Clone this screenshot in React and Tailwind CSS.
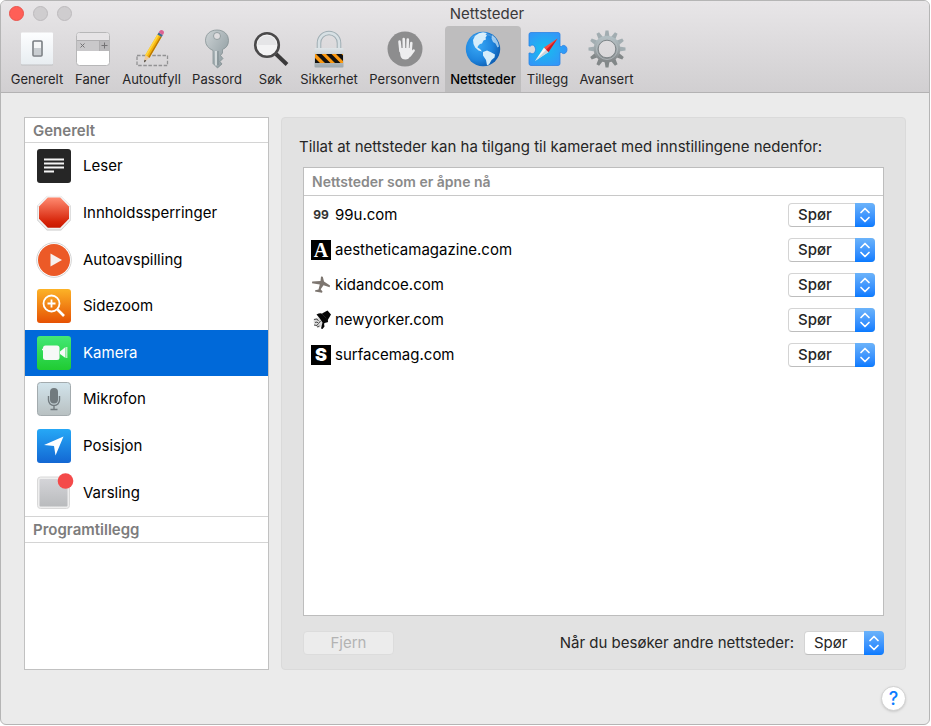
import { useState } from 'react'

function GeneralIcon() {
  return (
    <svg width="36" height="36" viewBox="0 0 36 36" aria-hidden="true">
      <defs>
        <linearGradient id="plate" x1="0" y1="0" x2="0" y2="1">
          <stop offset="0" stopColor="#fdfeff" />
          <stop offset="1" stopColor="#e8edf1" />
        </linearGradient>
      </defs>
      <rect x="2" y="2" width="32" height="32.5" rx="1" fill="#bfc0c2" />
      <rect x="2" y="1.5" width="32" height="32" rx="1" fill="url(#plate)" />
      <rect x="14" y="10" width="9" height="15" rx="1" fill="#eceef0" stroke="#7a7e82" strokeWidth="1.6" />
      <path d="M15 17h7v7h-7z" fill="#c9cdd1" />
      <path d="M15 11h7v6h-7z" fill="#f4f5f6" />
    </svg>
  )
}

function TabsIcon() {
  return (
    <svg width="36" height="36" viewBox="0 0 36 36" aria-hidden="true">
      <rect x="1.5" y="1.5" width="33" height="33" rx="3" fill="#fff" stroke="#b7b7b8" />
      <path d="M2 10V4.500Q2 2 4.500 2h27Q34 2 34 4.500V10z" fill="#e6e4e6" />
      <path d="M2 9.500h32V20H2z" fill="#c9c8ca" />
      <path d="M24.500 9.500H34V20h-9.500z" fill="#b9b8ba" />
      <path d="M2 9.500h32M24.500 9.500V20" stroke="#aeadaf" />
      <path d="M5.500 12.500l4 4m0-4l-4 4M26.500 14.500h6M29.500 11.500v6" stroke="#737274" />
    </svg>
  )
}

function PencilIcon() {
  return (
    <svg width="36" height="38" viewBox="0 0 36 38" className="overflow-visible" aria-hidden="true">
      <rect x="3" y="25.5" width="30.5" height="10" fill="none" stroke="#929294" strokeWidth="1.3" strokeDasharray="3.5 1.6" />
      <path d="M10 32.500L11.300 25 15.500 27.500z" fill="#eec99a" />
      <path d="M10 32.500l.6-2.800 1.700 1z" fill="#333" />
      <path d="M11.300 25L23.400 4.500l4.200 2.500-12.100 20.700z" fill="#f6b60c" />
      <path d="M11.300 25L23.400 4.500l1.500.900-12.200 20.500z" fill="#ffd53f" />
      <path d="M15.500 27.700L27.600 7l-1.100-.700L14.300 27z" fill="#b87607" />
      <path d="M23.400 4.500l1.300-2 4.200 2.500-1.300 2z" fill="#406a8d" />
      <path d="M24.700 2.500l.8-1.400Q27-.8 29 .4q1.800 1.200.7 3.200L28.900 5z" fill="#dc6293" />
    </svg>
  )
}

function KeyIcon() {
  return (
    <svg width="36" height="40" viewBox="0 0 36 40" aria-hidden="true">
      <defs>
        <linearGradient id="key" x1="0" y1="0" x2="1" y2="1">
          <stop offset="0" stopColor="#cdd3d5" />
          <stop offset="1" stopColor="#87959a" />
        </linearGradient>
      </defs>
      <path
        fillRule="evenodd"
        fill="url(#key)"
        stroke="#7d898d"
        strokeWidth=".7"
        d="M18 1C11 1 6.500 5.500 6.500 11.500q0 6.500 7.500 10v13l4.500 4.500 4.500-4-2-2.500 3-3-2.500-3 2-2.500V20.500q6-2.500 6-9C29.500 5.500 25 1 18 1zM18 3.500a3.500 3.500 0 1 1 0 7 3.500 3.500 0 0 1 0-7z"
      />
      <path d="M17 22v14.500" stroke="#e9eded" strokeWidth="1.4" />
      <path d="M19 22v14" stroke="#7b878b" />
    </svg>
  )
}

function SearchIcon() {
  return (
    <svg width="36" height="36" viewBox="0 0 36 36" aria-hidden="true">
      <path d="M23 23l11 10.500" stroke="#3b3a3b" strokeWidth="4" />
      <circle cx="14" cy="14" r="11.8" fill="#f3f3f4" stroke="#4a494a" strokeWidth="2.6" />
      <path d="M4.500 14a9.500 9.500 0 0 1 19 0z" fill="#e5e5e7" />
    </svg>
  )
}

function LockIcon() {
  return (
    <svg width="36" height="38" viewBox="0 0 36 38" aria-hidden="true">
      <defs>
        <linearGradient id="lock" x1="0" y1="0" x2="0" y2="1">
          <stop offset="0" stopColor="#dfe5e8" />
          <stop offset="1" stopColor="#9da7ac" />
        </linearGradient>
        <clipPath id="tape">
          <path d="M4 24h28v9H4z" />
        </clipPath>
      </defs>
      <path d="M8 20V13a10 10 0 0 1 20 0v7" fill="none" stroke="#9fadb3" strokeWidth="4.6" />
      <path d="M8 20V13a10 10 0 0 1 20 0v7" fill="none" stroke="#d7e0e4" strokeWidth="2.6" />
      <rect x="3.5" y="18" width="29" height="19.5" rx="1" fill="url(#lock)" />
      <g clipPath="url(#tape)">
        <path d="M4 24h28v9H4z" fill="#f99811" />
        <path d="M5 24h5.500l9 9H14zM15 24h5.500l9 9H24zM25 24h5.500l9 9H34zM-4 24h4l9 9H4z" fill="#121212" />
      </g>
    </svg>
  )
}

function HandIcon() {
  return (
    <svg width="36" height="36" viewBox="0 0 36 36" aria-hidden="true">
      <circle cx="18" cy="18" r="17.5" fill="#8d8d8e" />
      <g fill="none" stroke="#eeeeef" strokeLinecap="round" strokeWidth="2.6">
        <path d="M13.500 20l-1-9.500M17 19l-.3-11M20.500 19l.3-10.500M23.500 21l.8-9" />
        <path d="M23 24.500l3.700-5" strokeWidth="2.4" />
      </g>
      <path d="M12.300 17h12.400l.8 3-2.500 5.500q-1.200 3-4.500 3-4 0-5-3.500z" fill="#eeeeef" />
    </svg>
  )
}

function GlobeIcon() {
  return (
    <svg width="36" height="36" viewBox="0 0 36 36" aria-hidden="true">
      <defs>
        <radialGradient id="sea" cx=".35" cy=".4" r=".7">
          <stop offset="0" stopColor="#38a8f5" />
          <stop offset=".6" stopColor="#1f86df" />
          <stop offset="1" stopColor="#0b59ad" />
        </radialGradient>
      </defs>
      <circle cx="18" cy="18" r="17.2" fill="url(#sea)" />
      <g fill="#d5edfb">
        <path d="M10 5l4-2.800 4-1 4 .8-1.500 1.500 1.500 1-1.500 2 .5 2-2.500 1-1.500 3-2 .5-2 2-.5 1.500 2.500 1.500 2 2.500-3.500-1-3.300-3L8.500 13 8 9z" />
        <path d="M18 21l4-1.500 3.500 1.500 4.500 2.500-.5 3-3 2.500-2.500 4.500-2 .8-1-5.300-3-4.500z" />
        <path d="M27 4l3.500 3 2.500 4.500 1 4-1.500 1-2-4-2.500-1.500-1.500-3.500z" opacity=".7" />
      </g>
      <path d="M5 8.500A16 16 0 0 1 31 8.500Q18-1 5 8.500z" fill="#fff" opacity=".16" />
    </svg>
  )
}

function ExtensionsIcon() {
  return (
    <svg width="40" height="36" viewBox="0 0 40 36" aria-hidden="true">
      <defs>
        <radialGradient id="puzzle" cx=".4" cy=".5" r=".6">
          <stop offset="0" stopColor="#15bfee" />
          <stop offset="1" stopColor="#3395f8" />
        </radialGradient>
      </defs>
      <path
        d="M3 1.500h27q2 0 2 2v12h1.500c1-2 5.500-1.500 5.500 3s-4.500 5-5.500 3H32v11q0 2-2 2H3q-2 0-2-2V22h1.500c1.500 1.500 5 .5 5-3.500S4 13 2.500 15H1V3.500q0-2 2-2z"
        fill="url(#puzzle)"
        stroke="#2b83e3"
        strokeWidth=".8"
      />
      <path d="M7 30L16 16.500l4.500 4.500z" fill="#f8f8f8" />
      <path d="M7 30l11.200-11.200L20.500 21z" fill="#c9d3dc" />
      <path d="M29.500 7.500L16 16.500l4.500 4.500z" fill="#fc4c41" />
      <path d="M29.500 7.500L18.200 18.800 20.500 21z" fill="#c91822" />
    </svg>
  )
}

function GearIcon() {
  return (
    <svg width="38" height="38" viewBox="0 0 38 38" aria-hidden="true">
      <defs>
        <linearGradient id="gear" x1="0" y1="0" x2="0" y2="1">
          <stop offset="0" stopColor="#b2bfc3" />
          <stop offset="1" stopColor="#85898b" />
        </linearGradient>
      </defs>
      {[0, 30, 60, 90, 120, 150, 180, 210, 240, 270, 300, 330].map((deg) => (
        <path key={deg} d="M16.500 7l1-6.500h3l1 6.500z" transform={`rotate(${deg} 19 19)`} fill={deg > 90 && deg < 270 ? '#828788' : '#a2adb1'} />
      ))}
      <circle cx="19" cy="19" r="11" fill="none" stroke="url(#gear)" strokeWidth="4.6" />
      <circle cx="19" cy="19" r="8.8" fill="none" stroke="#7f8689" />
      <circle cx="19" cy="19" r="10.5" fill="none" stroke="#b5bdc0" strokeWidth=".8" />
    </svg>
  )
}

function ReaderIcon() {
  return (
    <svg width="36" height="36" viewBox="0 0 36 36" aria-hidden="true">
      <rect x="1" y="1" width="34" height="34" rx="3" fill="#262626" />
      <path d="M8 11.500h20M8 15.500h20M8 19.500h20M8 23.500h10" stroke="#f5f5f5" strokeWidth="1.8" />
    </svg>
  )
}

function StopIcon() {
  return (
    <svg width="36" height="36" viewBox="0 0 36 36" aria-hidden="true">
      <defs>
        <linearGradient id="stop" x1="0" y1="0" x2="0" y2="1">
          <stop offset="0" stopColor="#ff8a70" />
          <stop offset=".8" stopColor="#d62409" />
          <stop offset="1" stopColor="#c81800" />
        </linearGradient>
      </defs>
      <path d="M11 1h14l10 10v14L25 35.500H11L1 25V11z" fill="#c9c9c9" />
      <path d="M11 .8h14l9.500 10v13.700L25 34.500H11L1.500 24.500V10.800z" fill="#f3f3f3" />
      <path d="M11.800 2.500h12.400l8.800 9v12.300l-8.800 9H11.800l-8.800-9V11.500z" fill="url(#stop)" />
    </svg>
  )
}

function PlayIcon() {
  return (
    <svg width="36" height="36" viewBox="0 0 36 36" aria-hidden="true">
      <circle cx="18" cy="18" r="17.3" fill="#fff" stroke="#d2d2d2" />
      <circle cx="18" cy="18" r="16" fill="#ec5a27" />
      <path d="M14.500 11.500L26 18l-11.500 6.500z" fill="#f7f1ee" />
    </svg>
  )
}

function ZoomIcon() {
  return (
    <svg width="36" height="36" viewBox="0 0 36 36" aria-hidden="true">
      <defs>
        <linearGradient id="zoom" x1="0" y1="0" x2="0" y2="1">
          <stop offset="0" stopColor="#fcb327" />
          <stop offset="1" stopColor="#e65103" />
        </linearGradient>
      </defs>
      <rect x="1" y="1" width="34" height="34" rx="3" fill="url(#zoom)" />
      <circle cx="15.5" cy="15.5" r="8" fill="none" stroke="#fff" strokeWidth="1.8" />
      <path d="M11.500 15.500h8M15.500 11.500v8" stroke="#fff" strokeWidth="1.8" />
      <path d="M21.500 21.500l6.500 6.500" stroke="#fff" strokeWidth="2.6" />
    </svg>
  )
}

function CameraIcon() {
  return (
    <svg width="36" height="36" viewBox="0 0 36 36" aria-hidden="true">
      <defs>
        <linearGradient id="camera" x1="0" y1="0" x2="0" y2="1">
          <stop offset="0" stopColor="#43e875" />
          <stop offset="1" stopColor="#20cb32" />
        </linearGradient>
      </defs>
      <rect x="1" y="1" width="34" height="34" rx="3" fill="url(#camera)" />
      <rect x="7" y="10.5" width="16.5" height="14.5" rx="2.5" fill="#f7f9f7" />
      <path d="M24 16.500l5.500-4.500v11L24 19z" fill="#f7f9f7" />
      <path d="M30.800 12v11" stroke="#f7f9f7" />
      <path d="M6 14.500h2" stroke="#f7f9f7" strokeWidth="1.5" />
    </svg>
  )
}

function MicIcon() {
  return (
    <svg width="36" height="36" viewBox="0 0 36 36" aria-hidden="true">
      <defs>
        <linearGradient id="mic" x1="0" y1="0" x2="0" y2="1">
          <stop offset="0" stopColor="#d2e4ec" />
          <stop offset="1" stopColor="#b8c0c1" />
        </linearGradient>
      </defs>
      <rect x="1.5" y="1.5" width="33" height="33" rx="3" fill="url(#mic)" stroke="#a3abae" />
      <rect x="14" y="7" width="8" height="15.5" rx="4" fill="#717a7e" />
      <path d="M12.500 15v4a5.500 5.500 0 0 0 11 0v-4M18 24.500V28M14.500 28.500h7" fill="none" stroke="#717a7e" strokeWidth="1.4" />
    </svg>
  )
}

function LocationIcon() {
  return (
    <svg width="36" height="36" viewBox="0 0 36 36" aria-hidden="true">
      <defs>
        <linearGradient id="location" x1="0" y1="0" x2="0" y2="1">
          <stop offset="0" stopColor="#26a8f6" />
          <stop offset="1" stopColor="#1367d3" />
        </linearGradient>
      </defs>
      <rect x="1" y="1" width="34" height="34" rx="3" fill="url(#location)" />
      <path d="M27.500 8.500L19.500 27.500 18 18 8 17z" fill="#fff" />
    </svg>
  )
}

function NotificationIcon() {
  return (
    <svg width="36" height="36" viewBox="0 0 36 36" className="overflow-visible" aria-hidden="true">
      <defs>
        <linearGradient id="notification" x1="0" y1="0" x2="0" y2="1">
          <stop offset="0" stopColor="#d4d4d8" />
          <stop offset="1" stopColor="#b9bbbd" />
        </linearGradient>
      </defs>
      <rect x="1.5" y="2" width="32" height="31.5" rx="3" fill="#eeeeee" stroke="#d9d9d9" />
      <rect x="3.5" y="4" width="28" height="27.5" rx="1" fill="url(#notification)" />
      <circle cx="29.5" cy="6" r="7.8" fill="#f44a4a" />
    </svg>
  )
}

function PlaneIcon() {
  return (
    <svg width="20" height="20" viewBox="0 0 20 20" aria-hidden="true">
      <path d="M10 1.500l1.800.2 1.200 4.800 6 4-.3 1.700-6.200-2-2.800 4 1.800 2.300-.5 1.200-7-1.200.2-1.300 3.300-.7 1.300-5L1 8.200l.2-1.700 8.300-.5z" fill="#7c756f" />
    </svg>
  )
}

function NewYorkerIcon() {
  return (
    <svg width="20" height="20" viewBox="0 0 20 20" aria-hidden="true">
      <path d="M2.500 9l6-2 4 4-1 4.500-4 2.500-4.500-3z" fill="#dadada" />
      <path d="M3 9.500l3-.5 1.500 2M4 12.500l2-.5 1.500 1.500 2-2.500M3 15l3 .5 1-1.500M6 17l2.500-1" fill="none" stroke="#4a4a4a" />
      <path d="M11 3.500L16.500.5 20 4.500l-3.500 6z" fill="#070707" />
      <path d="M5.500 4.500q4-2 6-.5l5.500 6.500q.5 2-2 2l-2 1 .5 3-2 2.500-1.500-.5 1.500-6-3-4.500z" fill="#070707" />
    </svg>
  )
}

// white initial on a black tile
function LetterIcon({ letter, serif }) {
  return (
    <span
      className={`flex size-5 items-center justify-center bg-black leading-5 text-white ${
        serif ? "font-['Liberation_Serif',serif] text-xl font-bold" : 'text-lg font-black'
      }`}
    >
      {letter}
    </span>
  )
}

const toolbarItems = [
  { label: 'Generelt', icon: <GeneralIcon />, width: 'w-16' },
  { label: 'Faner', icon: <TabsIcon />, width: 'w-[47px]' },
  { label: 'Autoutfyll', icon: <PencilIcon />, width: 'w-[71px]' },
  { label: 'Passord', icon: <KeyIcon />, width: 'w-15' },
  { label: 'Søk', icon: <SearchIcon />, width: 'w-[47px]' },
  { label: 'Sikkerhet', icon: <LockIcon />, width: 'w-[70px]' },
  { label: 'Personvern', icon: <HandIcon />, width: 'w-[81px]' },
  { label: 'Nettsteder', icon: <GlobeIcon />, width: 'w-19' },
  { label: 'Tillegg', icon: <ExtensionsIcon />, width: 'w-[53px]' },
  { label: 'Avansert', icon: <GearIcon />, width: 'w-[65px]' },
]

const categories = [
  { label: 'Leser', icon: <ReaderIcon /> },
  { label: 'Innholdssperringer', icon: <StopIcon /> },
  { label: 'Autoavspilling', icon: <PlayIcon /> },
  { label: 'Sidezoom', icon: <ZoomIcon /> },
  { label: 'Kamera', icon: <CameraIcon /> },
  { label: 'Mikrofon', icon: <MicIcon /> },
  { label: 'Posisjon', icon: <LocationIcon /> },
  { label: 'Varsling', icon: <NotificationIcon /> },
]

const sites = [
  { name: '99u.com', icon: <span className="text-xs font-bold text-[#333]">99</span> },
  { name: 'aestheticamagazine.com', icon: <LetterIcon letter="A" serif /> },
  { name: 'kidandcoe.com', icon: <PlaneIcon /> },
  { name: 'newyorker.com', icon: <NewYorkerIcon /> },
  { name: 'surfacemag.com', icon: <LetterIcon letter="S" /> },
]

function PermissionSelect({ className, ...props }) {
  return (
    <span className={`relative block h-6 ${className}`}>
      <select
        {...props}
        defaultValue="ask"
        className="block h-6 w-full appearance-none rounded border border-[#d4d4d4] border-b-[#bdbdbd] bg-white pr-6 pl-[9px] text-[15px] leading-5 text-[#262626]"
      >
        <option value="ask">Spør</option>
        <option value="deny">Avslå</option>
        <option value="allow">Tillat</option>
      </select>
      <span className="pointer-events-none absolute inset-y-0 right-0 flex w-5 items-center justify-center rounded-r bg-linear-to-b from-[#6bb3fa] to-[#067aff]">
        <svg width="12" height="18" viewBox="0 0 12 18" fill="none" stroke="#fff" strokeWidth="1.7" strokeLinecap="round" strokeLinejoin="round" aria-hidden="true">
          <path d="M2 6.500l4-4 4 4M2 11.500l4 4 4-4" />
        </svg>
      </span>
    </span>
  )
}

export default function App() {
  const [tab, setTab] = useState('Nettsteder')
  const [category, setCategory] = useState('Kamera')

  return (
    <div className="flex min-h-screen bg-white pr-px pb-px font-[Inter,sans-serif] text-black">
      <div className="flex flex-1 flex-col overflow-hidden rounded-md border border-[#b5b5b5] bg-[#ebebeb]">
        <header className="border-b border-[#b3b2b3] bg-linear-to-b from-[#e8e6e8] to-[#d1cfd1]">
          <div className="flex h-[25px] items-center pr-[27px] pl-2">
            <div className="flex gap-[9px]">
              <button aria-label="Lukk" className="size-[15px] rounded-full border border-[#e9534c] bg-[#ff5f57]" />
              <button aria-label="Minimer" className="size-[15px] rounded-full border border-[#bcbabc] bg-[#cfcdcf]" />
              <button aria-label="Zoom" className="size-[15px] rounded-full border border-[#bcbabc] bg-[#cfcdcf]" />
            </div>
            <h1 className="flex-1 text-center text-[15px] leading-5 text-[#3a393a]">{tab}</h1>
          </div>
          <nav className="flex pl-1">
            {toolbarItems.map((item) => (
              <button
                key={item.label}
                onClick={() => setTab(item.label)}
                className={`flex h-[66px] shrink-0 flex-col items-center rounded-t text-[13px] leading-4 whitespace-nowrap ${item.width} ${
                  tab === item.label ? 'bg-[#bebdbe] font-medium text-black' : 'text-[#262526]'
                }`}
              >
                <span className="flex h-[45px] items-center">{item.icon}</span>
                {item.label}
              </button>
            ))}
          </nav>
        </header>

        <main className="flex flex-1 flex-col px-[23px] pt-6 pb-[13px]">
          <div className="flex flex-1 gap-3">
            <aside className="flex w-[245px] shrink-0 flex-col border border-[#c1c1c1] bg-white">
              <h2 className="h-[25px] border-b border-[#d4d4d4] pl-2 text-[15px] leading-[25px] font-semibold text-[#7d7d7d]">Generelt</h2>
              <ul className="grid h-[373px] grid-rows-8">
                {categories.map((item) => (
                  <li key={item.label} className="grid">
                    <button
                      onClick={() => setCategory(item.label)}
                      className={`flex items-center gap-[11px] pl-[11px] text-left text-[15px] leading-6 ${
                        category === item.label ? 'bg-[#0069d9] text-white' : ''
                      }`}
                    >
                      {item.icon}
                      {item.label}
                    </button>
                  </li>
                ))}
              </ul>
              <h2 className="h-[27px] border-y border-[#d4d4d4] pl-2 text-[15px] leading-[25px] font-semibold text-[#7d7d7d]">Programtillegg</h2>
            </aside>

            <section className="flex flex-1 flex-col rounded border border-[#dadada] bg-[#e2e2e2] px-[21px] pt-[19px] pb-[14px]">
              <p className="-ml-1 text-[15px] leading-5 whitespace-nowrap text-[#262626]">
                Tillat at nettsteder kan ha tilgang til kameraet med innstillingene nedenfor:
              </p>
              <div className="mt-[10px] flex-1 border border-[#bdbdbd] bg-white">
                <table className="w-full">
                  <thead>
                    <tr className="h-[27px] border-b border-[#c8c8c8]">
                      <th colSpan={2} className="pt-px pl-2 text-left text-sm font-semibold text-[#8a8a8a]">
                        Nettsteder som er åpne nå
                      </th>
                    </tr>
                  </thead>
                  <tbody className="before:block before:h-0.5">
                    {sites.map((site) => (
                      <tr key={site.name} className="h-[35px]">
                        <td className="pl-[7px]">
                          <div className="flex items-center gap-1 text-[15px]">
                            <span className="flex w-5 justify-center">{site.icon}</span>
                            {site.name}
                          </div>
                        </td>
                        <td className="w-[95px] pr-2">
                          <PermissionSelect aria-label={`Tilgang for ${site.name}`} className="w-[87px] font-medium" />
                        </td>
                      </tr>
                    ))}
                  </tbody>
                </table>
              </div>
              <div className="mt-[15px] flex items-center justify-between">
                <button disabled className="h-6 w-[91px] rounded border border-[#dcdcdc] bg-[#ececec] text-[15px] leading-5 text-[#b3b3b3]">
                  Fjern
                </button>
                <div className="flex items-center gap-[10px]">
                  <label htmlFor="other-sites" className="text-[15px] leading-5 text-[#262626]">
                    Når du besøker andre nettsteder:
                  </label>
                  <PermissionSelect id="other-sites" className="w-20" />
                </div>
              </div>
            </section>
          </div>
          <div className="mt-4 flex justify-end">
            <button aria-label="Hjelp" className="size-[25px] rounded-full border border-[#d0d0d0] bg-white text-lg leading-5 font-medium text-[#0a7cff] shadow-sm">
              ?
            </button>
          </div>
        </main>
      </div>
    </div>
  )
}
